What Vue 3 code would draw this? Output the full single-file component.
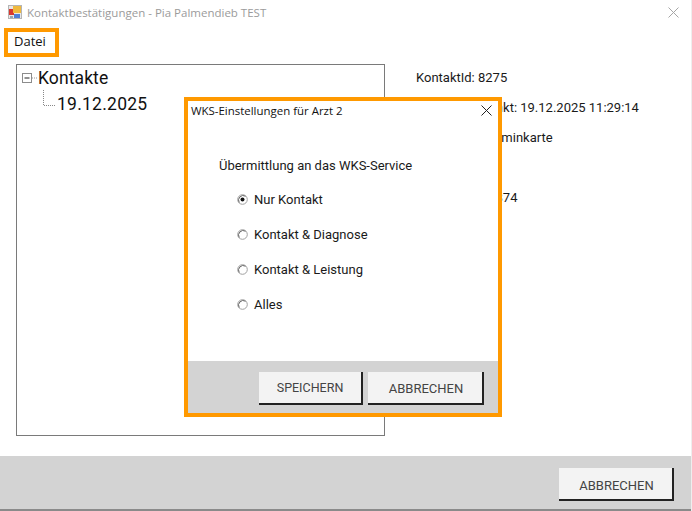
<script setup>
const details = [
  'KontaktId: 8275',
  'Kontaktzeitpunkt: 19.12.2025 11:29:14',
  'Kontaktart: Terminkarte',
  '',
  'PatientenId: 1874'
]
const options = [
  { label: 'Nur Kontakt', checked: true },
  { label: 'Kontakt & Diagnose', checked: false },
  { label: 'Kontakt & Leistung', checked: false },
  { label: 'Alles', checked: false }
]
</script>

<template>
  <div class="window">
    <header class="titlebar">
      <svg class="appicon" width="14" height="14" viewBox="0 0 14 14">
        <rect x="0.5" y="0.5" width="13" height="13" fill="#e8e8e8" stroke="#b5b5b5" />
        <rect x="1" y="4" width="5" height="6" fill="#d8392f" />
        <rect x="5" y="1" width="8" height="7" fill="#efb93f" />
        <rect x="6" y="9" width="6" height="4" fill="#4f7fd6" />
        <rect x="2" y="11" width="3" height="2" fill="#9aa5b5" />
      </svg>
      <span class="title">Kontaktbestätigungen - Pia Palmendieb TEST</span>
      <svg class="winclose" width="11" height="11" viewBox="0 0 11 11">
        <path d="M0.5 0.5 10.5 10.5M10.5 0.5 0.5 10.5" stroke="#a6a6a6" fill="none" />
      </svg>
    </header>
    <nav class="menubar">
      <span class="menuitem">Datei</span>
    </nav>
    <main class="content">
      <section class="tree">
        <div class="tree-root">
          <svg class="expander" width="16" height="12" viewBox="0 0 16 12">
            <rect x="0.5" y="1.5" width="9" height="9" fill="#fff" stroke="#8c8c8c" />
            <path d="M2.5 6H7.5" stroke="#222" />
            <path d="M10 6H15" stroke="#999" stroke-dasharray="1 1" />
          </svg>
          <span>Kontakte</span>
        </div>
        <div class="tree-child">
          <svg class="branch" width="12" height="16" viewBox="0 0 12 16">
            <path d="M0.5 0V15.5H12" stroke="#888" fill="none" stroke-dasharray="1 1" />
          </svg>
          <span>19.12.2025</span>
        </div>
      </section>
      <section class="details">
        <div v-for="(line, i) in details" :key="i" class="detail">{{ line }}</div>
      </section>
    </main>
    <footer class="footer">
      <button class="btn btn-main" type="button">ABBRECHEN</button>
    </footer>

    <div class="dialog">
      <div class="dialog-head">
        <span>WKS-Einstellungen für Arzt 2</span>
        <svg width="11" height="11" viewBox="0 0 11 11">
          <path d="M0.5 0.5 10.5 10.5M10.5 0.5 0.5 10.5" stroke="#222" fill="none" />
        </svg>
      </div>
      <div class="dialog-body">
        <p class="intro">Übermittlung an das WKS-Service</p>
        <div class="options">
          <label v-for="o in options" :key="o.label" class="option">
            <svg width="11" height="11" viewBox="0 0 11 11">
              <circle cx="5.5" cy="5.5" r="4.8" fill="#fff" stroke="#a0a0a0" />
              <path d="M2.2 8.5A4.6 4.6 0 0 1 8.5 2.2" stroke="#666" fill="none" />
              <circle v-if="o.checked" cx="5.5" cy="5.5" r="2" fill="#111" />
            </svg>
            <span>{{ o.label }}</span>
          </label>
        </div>
      </div>
      <div class="dialog-foot">
        <button class="btn btn-save" type="button">SPEICHERN</button>
        <button class="btn btn-cancel" type="button">ABBRECHEN</button>
      </div>
    </div>
  </div>
</template>

<style>
html, body { margin: 0; background: #fff; }
</style>

<style scoped>
.window {
  position: relative;
  width: 692px;
  height: 511px;
  box-sizing: border-box;
  display: flex;
  flex-direction: column;
  overflow: hidden;
  background: #fff;
  font-family: Roboto, "Liberation Sans", sans-serif;
  font-size: 13px;
  color: #1a1a1a;
  border-right: 1px solid #eee;
}
.titlebar {
  height: 28px;
  flex: none;
  display: flex;
  align-items: center;
  padding: 0 12px 0 8px;
  box-sizing: border-box;
}
.appicon { margin-right: 5px; margin-top: -5px; }
.title {
  flex: 1;
  font-family: "Open Sans", sans-serif;
  font-size: 11.5px;
  color: #9b9b9b;
  margin-top: -3px;
}
.winclose { margin-top: -4px; }
.menubar {
  height: 29px;
  flex: none;
  box-sizing: border-box;
  display: flex;
}
.menuitem {
  width: 55px;
  height: 29px;
  box-sizing: border-box;
  border: 4px solid #ff9900;
  font-family: "Open Sans", sans-serif;
  font-size: 13px;
  color: #111;
  line-height: 19px;
  padding-left: 6px;
  margin-left: 4px;
}
.content {
  flex: 1;
  display: flex;
  padding: 8px 0 20px 16px;
  min-height: 0;
  margin-top: -1px;
}
.tree {
  width: 369px;
  box-sizing: border-box;
  border: 1px solid #7a7a7a;
  padding: 1px 0 0 5px;
  font-size: 17.5px;
  letter-spacing: 0.1px;
  color: #111;
}
.tree-root { display: flex; align-items: center; height: 23px; }
.tree-child { display: flex; align-items: center; height: 29px; padding-left: 21px; }
.tree-child span { letter-spacing: 0.25px; }
.branch { margin: -11px 2px 0 0; }
.details { padding: 5px 0 0 31px; }
.detail { height: 30px; line-height: 17px; white-space: nowrap; }
.detail:empty { visibility: hidden; }
.footer {
  height: 55px;
  flex: none;
  background: #d3d3d3;
  border-bottom: 2px solid #8a8a8a;
  box-sizing: border-box;
  display: flex;
  justify-content: flex-end;
  align-items: flex-start;
  padding: 12px 17px 0 0;
}
.btn {
  height: 33px;
  box-sizing: border-box;
  border: 0;
  border-right: 2px solid #222;
  border-bottom: 2px solid #222;
  background: #f3f3f3;
  font-family: Roboto, "Liberation Sans", sans-serif;
  font-size: 13px;
  color: #444;
  padding: 0;
}
.btn-main { width: 115px; padding: 3px 0 0 2px; }
.btn-save { width: 104px; font-size: 12.5px; }
.btn-cancel { width: 116px; padding: 2px 0 0 2px; }
.dialog {
  position: absolute;
  left: 184px;
  top: 97px;
  width: 318px;
  height: 320px;
  box-sizing: border-box;
  border: 4px solid #ff9900;
  background: #fff;
  display: flex;
  flex-direction: column;
}
.dialog-head {
  height: 18px;
  display: flex;
  justify-content: space-between;
  align-items: center;
  padding: 0 6px 0 3px;
  font-family: "Open Sans", sans-serif;
  font-size: 11.45px;
  color: #111;
}
.dialog-body { flex: 1; }
.intro { margin: 39px 0 0 31px; line-height: 16px; }
.options { margin-top: 17px; padding-left: 49px; display: flex; flex-direction: column; gap: 18px; }
.option { display: flex; align-items: center; gap: 6px; height: 17px; }
.dialog-foot {
  height: 52px;
  flex: none;
  background: #d3d3d3;
  display: flex;
  justify-content: flex-end;
  align-items: flex-start;
  gap: 5px;
  padding: 11px 14px 0 0;
  box-sizing: border-box;
}
</style>
